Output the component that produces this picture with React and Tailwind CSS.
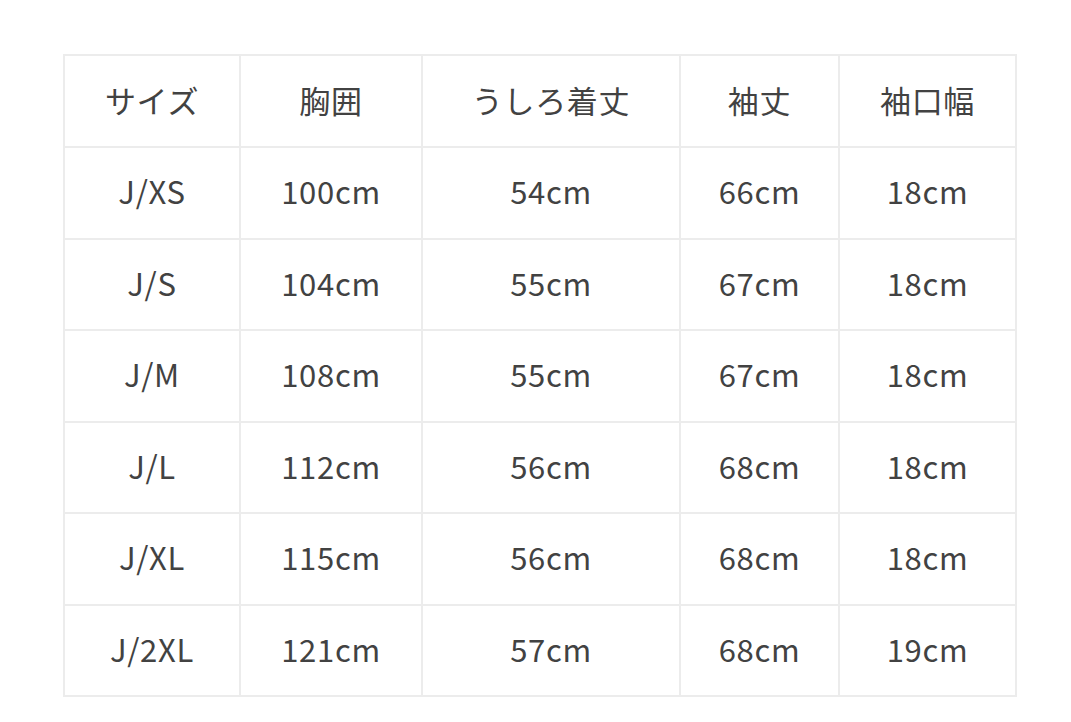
import React from "react";

const headers = ["サイズ", "胸囲", "うしろ着丈", "袖丈", "袖口幅"];

const rows = [
  ["J/XS", "100cm", "54cm", "66cm", "18cm"],
  ["J/S", "104cm", "55cm", "67cm", "18cm"],
  ["J/M", "108cm", "55cm", "67cm", "18cm"],
  ["J/L", "112cm", "56cm", "68cm", "18cm"],
  ["J/XL", "115cm", "56cm", "68cm", "18cm"],
  ["J/2XL", "121cm", "57cm", "68cm", "19cm"],
];

const widths = ["w-[176px]", "w-[182px]", "w-[258px]", "w-[159px]", "w-[177px]"];

export default function App() {
  return (
    <div
      className="min-h-[722px] bg-white pt-[54px] pl-[63px]"
      style={{ fontFamily: '"Noto Sans CJK JP", "Noto Sans", sans-serif' }}
    >
      <table className="border-collapse text-[31px] tracking-[0.7px] text-[#424242]">
        <colgroup>
          {widths.map((w, i) => (
            <col key={i} className={w} />
          ))}
        </colgroup>
        <thead>
          <tr className="h-[92px]">
            {headers.map((h) => (
              <th
                key={h}
                className="border-2 border-[#ececec] pb-1 text-center font-normal leading-none"
              >
                {h}
              </th>
            ))}
          </tr>
        </thead>
        <tbody>
          {rows.map((r) => (
            <tr key={r[0]} className="h-[91.5px]">
              {r.map((c, i) => (
                <td
                  key={i}
                  className="border-2 border-[#ececec] pb-1 text-center leading-none"
                >
                  {c}
                </td>
              ))}
            </tr>
          ))}
        </tbody>
      </table>
    </div>
  );
}
